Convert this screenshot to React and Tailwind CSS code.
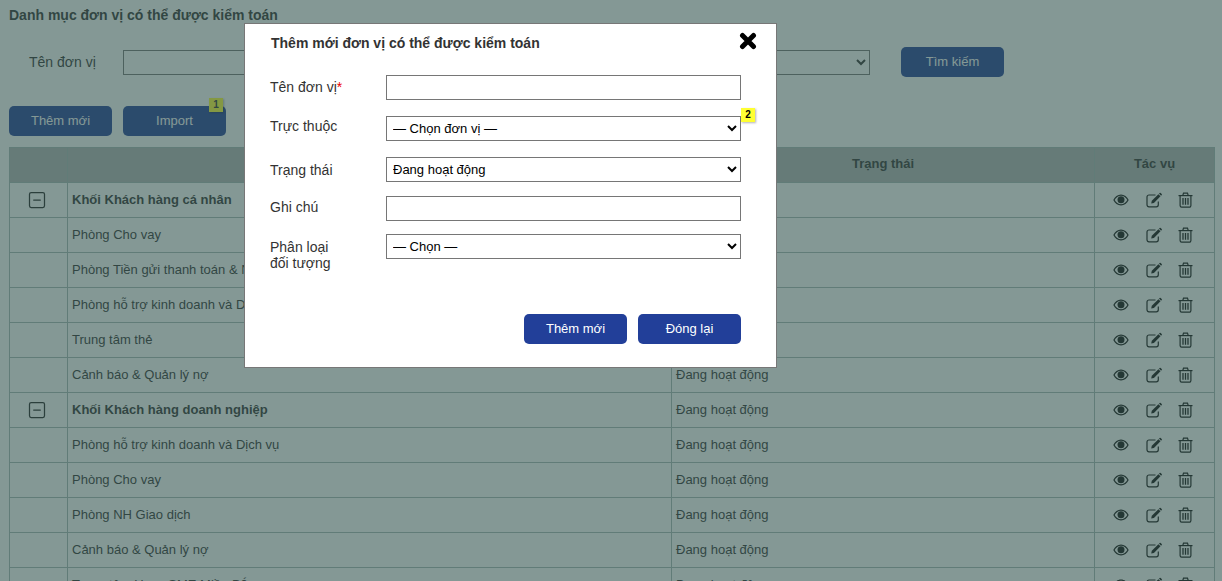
import React from "react";
import { SquareMinus } from "lucide-react";

const rows = [
  ["Khối Khách hàng cá nhân", true],
  ["Phòng Cho vay"],
  ["Phòng Tiền gửi thanh toán & Ngân quỹ"],
  ["Phòng hỗ trợ kinh doanh và Dịch vụ"],
  ["Trung tâm thẻ"],
  ["Cảnh báo & Quản lý nợ"],
  ["Khối Khách hàng doanh nghiệp", true],
  ["Phòng hỗ trợ kinh doanh và Dịch vụ"],
  ["Phòng Cho vay"],
  ["Phòng NH Giao dịch"],
  ["Cảnh báo & Quản lý nợ"],
  ["Trung tâm Upay SME Miền Bắc"],
];

function Eye() {
  return (
    <svg width="16" height="14" viewBox="0 0 16 14" fill="currentColor">
      <path fillRule="evenodd" d="M8 1.5C4.6 1.5 1.9 3.8 0.3 7c1.6 3.2 4.3 5.5 7.7 5.5s6.100-2.300 7.700-5.500C14.100 3.800 11.400 1.500 8 1.500zM8 2.700c2.700 0 4.900 1.800 6.300 4.300-1.400 2.500-3.600 4.300-6.300 4.300S3.100 9.500 1.700 7C3.100 4.500 5.300 2.700 8 2.700z" />
      <circle cx="8" cy="6.700" r="3.500" />
    </svg>
  );
}

function Edit() {
  return (
    <svg width="16" height="16" viewBox="0 0 16 16" fill="none" stroke="currentColor">
      <path d="M12.300 9.500v3.300a2 2 0 0 1-2 2H3a2 2 0 0 1-2-2V5a2 2 0 0 1 2-2h6.500" strokeWidth="1.200" />
      <path d="M5.800 8.800 12.400 2.200l2.100 2.100-6.600 6.600-2.700.6z" fill="currentColor" stroke="none" />
      <path d="M13 1.600l.6-.6a.8.8 0 0 1 1.100 0l1 1a.8.8 0 0 1 0 1.100l-.6.600z" fill="currentColor" stroke="none" />
    </svg>
  );
}

function Trash() {
  return (
    <svg width="15" height="16" viewBox="0 0 15 16" fill="none" stroke="currentColor" strokeWidth="1.200">
      <path d="M0.500 3.600h14" />
      <path d="M4.800 3.500 5.500 1.200h4l.7 2.300" />
      <path d="M2.100 3.600v10a1.600 1.600 0 0 0 1.600 1.600h7.600a1.600 1.600 0 0 0 1.600-1.600v-10" />
      <path d="M5 6v6.800M7.500 6v6.800M10 6v6.800" strokeWidth="1.300" />
    </svg>
  );
}

function Close() {
  return (
    <svg width="18" height="18" viewBox="0 0 18 18" className="text-black">
      <path d="M3.500 3.500 14.500 14.500M14.500 3.500 3.500 14.500" stroke="currentColor" strokeWidth="5" strokeLinecap="round" fill="none" />
    </svg>
  );
}

function Btn({ children, badge }) {
  return (
    <button className="relative w-[103px] h-[30px] rounded-[5px] bg-[#223f99] text-white text-[13px]">
      {children}
      {badge}
    </button>
  );
}

function Field({ label, children, className }) {
  return (
    <div className={"flex items-start " + className}>
      <div className="w-[116px] text-[14px] leading-4 text-[#333]">{label}</div>
      {children}
    </div>
  );
}

const ctl = "w-[355px] h-[25px] border border-[#767676] bg-white text-[13px] text-black";

export default function App() {
  return (
    <div className="relative h-[581px] overflow-hidden bg-white font-['Liberation_Sans',Arial,sans-serif] text-[13px] text-[#333]">
      <div className="px-[9px] pt-[7px]">
        <div className="font-bold leading-4 text-[14px]">Danh mục đơn vị có thể được kiểm toán</div>
        <div className="flex items-center mt-[24px] h-[30px]">
          <span className="w-[114px] pl-5 text-[14px]">Tên đơn vị</span>
          <input className="w-[330px] h-[25px] border border-[#767676] bg-white" />
          <select className="ml-[20px] w-[397px] h-[25px] border border-[#767676] bg-white" />
          <div className="ml-[31px]"><Btn>Tìm kiếm</Btn></div>
        </div>
        <div className="flex gap-[11px] mt-[29px]">
          <Btn>Thêm mới</Btn>
          <Btn badge={<span className="absolute right-[3px] top-[-8px] w-[14px] h-[14px] bg-[#ffff33] text-[#333] text-[10px] leading-[14px] font-bold shadow-[1px_1px_2px_rgba(0,0,0,.3)]">1</span>}>Import</Btn>
        </div>
        <table className="mt-[11px] w-[1205px] table-fixed border-collapse">
          <colgroup>
            <col className="w-[58px]" />
            <col className="w-[604px]" />
            <col className="w-[423px]" />
            <col className="w-[120px]" />
          </colgroup>
          <thead>
            <tr className="h-[35px]">
              {["", "Tên đơn vị", "Trạng thái", "Tác vụ"].map((h, i) => (
                <th key={i} className="border border-[#a9bab6] bg-[#b4b7b7] font-bold text-center text-[13px] pt-0 pb-[3px] px-0">{h}</th>
              ))}
            </tr>
          </thead>
          <tbody>
            {rows.map(([name, bold], i) => (
              <tr key={i} className="h-[35px]">
                <td className="border border-[#a9bab6] text-center pl-0 pr-[3px] py-0">
                  {bold && <SquareMinus size={20} strokeWidth={1.5} className="inline-block align-middle text-[#222]" />}
                </td>
                <td className={"border border-[#a9bab6] pl-[4px] pr-[3px] pt-0 pb-[1px] " + (bold ? "font-bold" : "")}>{name}</td>
                <td className="border border-[#a9bab6] pl-[4px] pr-[3px] pt-0 pb-[1px]">Đang hoạt động</td>
                <td className="border border-[#a9bab6] p-0">
                  <div className="flex items-center pl-[18px] pr-[21px] justify-between text-[#111]">
                    <Eye />
                    <Edit />
                    <Trash />
                  </div>
                </td>
              </tr>
            ))}
          </tbody>
        </table>
      </div>

      <div className="absolute inset-0 bg-[rgba(50,83,78,0.6)]" />

      <div className="absolute left-[244px] top-[23px] w-[533px] h-[345px] bg-white border border-[#777] pl-[25px] pr-[35px]">
        <div className="flex justify-between items-center mt-[9px] relative">
          <span className="font-bold ml-[1px] text-[14px]">Thêm mới đơn vị có thể được kiểm toán</span>
          <span className="absolute right-[-16px] top-[-1px]"><Close /></span>
        </div>
        <Field className="mt-[21px]" label={<span className="block pt-[4px]">Tên đơn vị<span className="text-[#e00]">*</span></span>}>
          <input className={ctl} />
        </Field>
        <Field className="mt-[16px] relative" label={<span className="block pt-[2px]">Trực thuộc</span>}>
          <select className={ctl + " pl-[2px]"}><option>— Chọn đơn vị —</option></select>
          <span className="absolute left-[471px] top-[-8px] w-[14px] h-[14px] bg-[#ffff33] text-center text-black text-[10px] leading-[14px] font-bold shadow-[1px_1px_2px_rgba(0,0,0,.3)]">2</span>
        </Field>
        <Field className="mt-[16px]" label={<span className="block pt-[5px]">Trạng thái</span>}>
          <select className={ctl + " pl-[2px]"}><option>Đang hoạt động</option></select>
        </Field>
        <Field className="mt-[14px]" label={<span className="block pt-[3px]">Ghi chú</span>}>
          <input className={ctl} />
        </Field>
        <Field className="mt-[13px]" label={<span className="block pt-[5px]">Phân loại<br />đối tượng</span>}>
          <select className={ctl + " pl-[2px]"}><option>— Chọn —</option></select>
        </Field>
        <div className="flex justify-end gap-[11px] mt-[43px]">
          <Btn>Thêm mới</Btn>
          <Btn>Đóng lại</Btn>
        </div>
      </div>
    </div>
  );
}
